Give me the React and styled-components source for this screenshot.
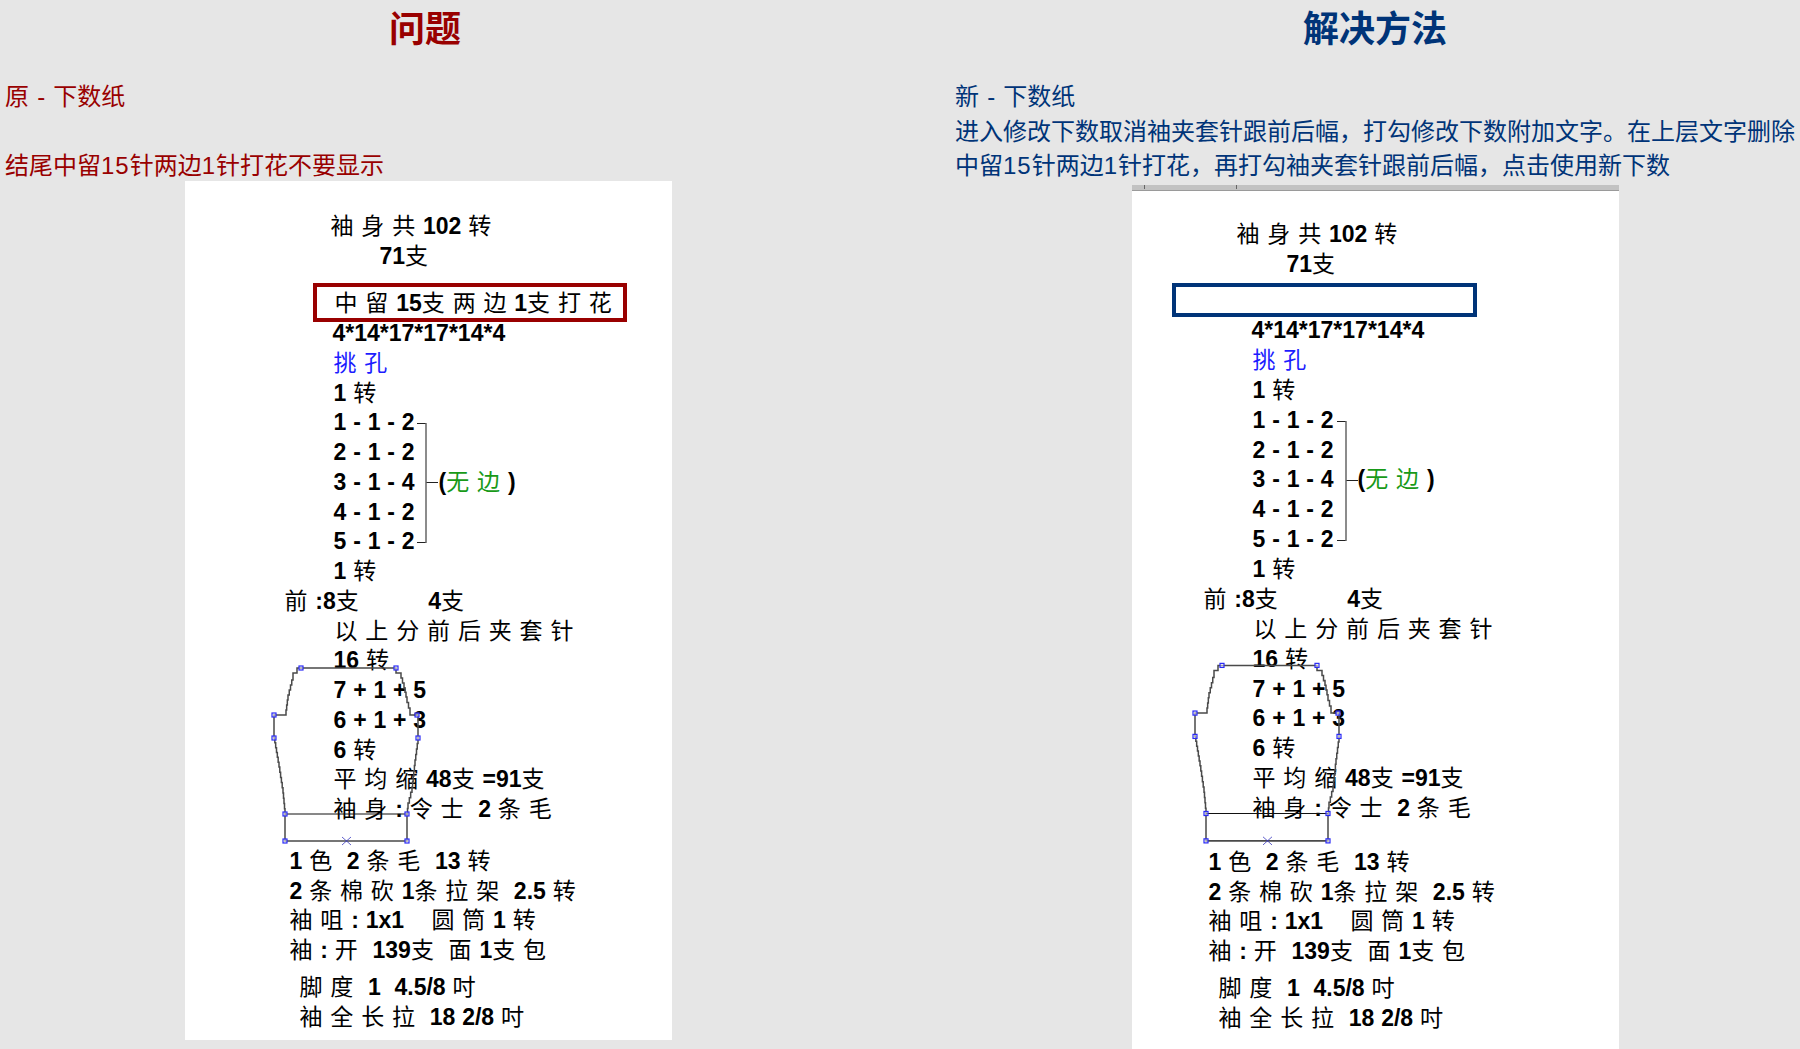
import React from "react";
import styled, { createGlobalStyle } from "styled-components";

const Global = createGlobalStyle`
  html, body { margin: 0; padding: 0; height: 100%; overflow: hidden; background: #e6e6e6; }
  body { font-family: "Liberation Sans", "Noto Sans CJK SC", sans-serif; }
`;

const Page = styled.div`
  display: grid;
  grid-template-columns: 850px 850px;
  column-gap: 100px;
  height: 1049px;
  overflow: hidden;
  background: #e6e6e6;
`;

const Column = styled.section`
  display: flex;
  flex-direction: column;
  align-items: center;
  min-width: 0;
  color: ${(p) => p.$color};
`;

const Heading = styled.h2`
  align-self: stretch;
  margin: 0 0 20px;
  height: 60px;
  line-height: 60px;
  text-align: center;
  font-size: 36px;
  font-weight: 700;
  font-family: "Liberation Sans", "Noto Sans CJK SC", sans-serif;
`;

const Notes = styled.div`
  align-self: stretch;
  height: 101px;
  padding-left: 5px;
  font-size: 24px;
  line-height: 34px;
  white-space: nowrap;
  word-spacing: 1.5px;
  font-family: "Liberation Sans", "Noto Sans CJK SC", sans-serif;
`;

const NoteLine = styled.div`
  height: 34.5px;
`;

const Digits = styled.span`
  letter-spacing: 1px;
`;

const Sheet = styled.div`
  position: relative;
  flex: none;
  width: 487px;
  height: ${(p) => p.$height}px;
  margin-top: ${(p) => p.$top}px;
  margin-left: ${(p) => p.$nudge}px;
  background: #fff;
  color: #000;
  font-size: 23px;
`;

const Ruler = styled.div`
  display: flex;
  gap: 91px;
  height: 5px;
  padding-left: 12px;
  background: #c2c2c2;
  border-bottom: 1px solid #9a9a9a;
`;

const Tick = styled.span`
  width: 1px;
  height: 4px;
  background: #666;
`;

const Rows = styled.div`
  position: relative;
  padding-top: ${(p) => p.$pad || 0}px;
  margin-top: ${(p) => p.$gap || 0}px;
`;

const Row = styled.div`
  height: ${(p) => p.$pitch}px;
  line-height: ${(p) => p.$pitch}px;
  padding-left: ${(p) => p.$x}px;
  white-space: pre;
  word-spacing: 0.45px;
  color: ${(p) => p.$tone || "#000"};
`;

const Num = styled.span`
  font-weight: 700;
  color: #000;
  font-family: "Liberation Sans", sans-serif;
`;

const Han = styled.span`
  letter-spacing: 1px;
  line-height: 0;
  font-family: "Noto Sans CJK SC", sans-serif;
  font-weight: 400;
`;

const Annot = styled.span`
  margin-left: 24px;
  color: #189a18;
`;

const Callout = styled.div`
  position: relative;
  box-sizing: border-box;
  width: ${(p) => p.$w}px;
  height: ${(p) => p.$h}px;
  margin-left: ${(p) => p.$x}px;
  margin-top: ${(p) => p.$gap}px;
  padding-left: 18px;
  line-height: ${(p) => p.$h - 6}px;
  border: 4px solid ${(p) => p.$color};
  white-space: pre;
  word-spacing: 0.45px;
  color: #000;
  background: #fff;
`;

const Drawing = styled.svg`
  position: absolute;
  left: ${(p) => p.$x}px;
  top: ${(p) => p.$y}px;
  overflow: visible;
  pointer-events: none;
`;

function Mixed({ text }) {
  return text
    .split(/([\u4e00-\u9fff]+)/)
    .filter(Boolean)
    .map((part, i) =>
      /[\u4e00-\u9fff]/.test(part) ? <Han key={i}>{part}</Han> : <Num key={i}>{part}</Num>
    );
}

// turn slanted outline segments into the small stairs of the pattern drawing
function stairs(points, step = 5) {
  let d = `M${points[0][0]} ${points[0][1]}`;
  for (let i = 1; i < points.length; i++) {
    const [x0, y0] = points[i - 1];
    const [x1, y1] = points[i];
    if (x0 === x1 || y0 === y1) {
      d += `L${x1} ${y1}`;
      continue;
    }
    const n = Math.max(1, Math.round(Math.abs(y1 - y0) / step));
    for (let k = 1; k <= n; k++) {
      d += `V${y0 + ((y1 - y0) * k) / n}H${x0 + ((x1 - x0) * k) / n}`;
    }
  }
  return d;
}

const OUTLINE = [
  [41, 28], [136, 28], [141, 33], [144, 43], [147, 57], [150, 68], [153, 75], [158, 75],
  [158, 98], [155, 120], [152, 147], [148, 163], [147, 174], [147, 201], [25, 201],
  [25, 174], [23, 153], [19, 127], [14, 98], [14, 75], [26, 75], [28, 60], [33, 40], [37, 33], [41, 28],
];
const NODES = [
  [41, 28], [136, 28], [14, 75], [157, 75], [14, 98], [158, 98], [25, 174], [147, 174], [25, 201], [147, 201],
];

function Garment({ x, y, height }) {
  return (
    <Drawing $x={x} $y={y} width="175" height={height} viewBox="0 0 175 210" preserveAspectRatio="none">
      <path d={stairs(OUTLINE)} fill="none" stroke="#4a4a4a" strokeWidth="1.5" />
      <path d="M25 174H147" stroke="#111" strokeWidth="1" />
      {NODES.map(([cx, cy]) => (
        <rect key={`${cx}-${cy}`} x={cx - 2} y={cy - 2} width="4" height="4" fill="#fff" fillOpacity="0.5" stroke="#2a2af5" strokeWidth="1.2" />
      ))}
      <path d="M82 197L91 205M91 197L82 205" stroke="#3a3ac0" strokeWidth="0.8" />
    </Drawing>
  );
}

function Bracket({ x, y }) {
  return (
    <Drawing $x={x} $y={y} width="22" height="120" viewBox="0 0 22 120">
      <path d="M0 0.5H9M0 119.5H9M9 59.5H21" stroke="#222" strokeWidth="1" fill="none" />
      <path d="M9 0V120" stroke="#666" strokeWidth="1.5" fill="none" />
    </Drawing>
  );
}

const BODY = [
  { t: "4*14*17*17*14*4", x: 148 },
  { t: "挑 孔", x: 149, tone: "#1c1cff" },
  { t: "1 转", x: 149 },
  { t: "1 - 1 - 2", x: 149 },
  { t: "2 - 1 - 2", x: 149 },
  { t: "3 - 1 - 4", x: 149, note: "(无 边 )" },
  { t: "4 - 1 - 2", x: 149 },
  { t: "5 - 1 - 2", x: 149 },
  { t: "1 转", x: 149 },
  { t: "前 :8支          4支", x: 100 },
  { t: "以 上 分 前 后 夹 套 针", x: 150 },
  { t: "16 转", x: 149 },
  { t: "7 + 1 + 5", x: 149 },
  { t: "6 + 1 + 3", x: 149 },
  { t: "6 转", x: 149 },
  { t: "平 均 缩 48支 =91支", x: 149 },
  { t: "袖 身 : 令 士  2 条 毛", x: 149 },
];
const SPEC = [
  { t: "1 色  2 条 毛  13 转", x: 105 },
  { t: "2 条 棉 砍 1条 拉 架  2.5 转", x: 105 },
  { t: "袖 咀 : 1x1    圆 筒 1 转", x: 105 },
  { t: "袖 : 开  139支  面 1支 包", x: 105 },
];
const SIZES = [
  { t: "脚 度  1  4.5/8 吋", x: 115 },
  { t: "袖 全 长 拉  18 2/8 吋", x: 115 },
];

function PatternRows({ rows, shift, pitch }) {
  return rows.map((r) => (
    <Row key={r.t} $x={r.x - shift} $pitch={pitch} $tone={r.tone}>
      <Mixed text={r.t} />
      {r.note && (
        <Annot>
          <Mixed text={r.note} />
        </Annot>
      )}
    </Row>
  ));
}

function Pattern({ top, nudge, height, ruler, headPad, head, shift, pitch, box, bodyGap, specGap, garment, bracket }) {
  return (
    <Sheet $top={top} $nudge={nudge} $height={height}>
      {ruler && (
        <Ruler>
          <Tick />
          <Tick />
        </Ruler>
      )}
      <Rows $pad={headPad}>
        <PatternRows rows={[{ t: "袖 身 共 102 转", x: head[0] }, { t: "71支", x: head[1] }]} shift={0} pitch={30} />
      </Rows>
      <Callout $x={box.x} $w={box.w} $h={box.h} $gap={box.gap} $color={box.color}>
        {box.text && <Mixed text={box.text} />}
      </Callout>
      <Rows $gap={bodyGap}>
        <PatternRows rows={BODY} shift={shift} pitch={pitch} />
      </Rows>
      <Rows $gap={specGap}>
        <PatternRows rows={SPEC} shift={shift} pitch={29.75} />
      </Rows>
      <Rows $gap={6}>
        <PatternRows rows={SIZES} shift={shift} pitch={30} />
      </Rows>
      <Garment {...garment} />
      <Bracket {...bracket} />
    </Sheet>
  );
}

export default function App() {
  return (
    <Page>
      <Global />
      <Column $color="#990000">
        <Heading>问题</Heading>
        <Notes>
          <NoteLine>原 - 下数纸</NoteLine>
          <NoteLine />
          <NoteLine>
            结尾中留<Digits>15</Digits>针两边<Digits>1</Digits>针打花不要显示
          </NoteLine>
        </Notes>
        <Pattern
          top={0}
          nudge={6}
          height={859}
          headPad={30}
          head={[146, 195]}
          shift={0}
          pitch={29.75}
          box={{ x: 128, w: 314, h: 39, gap: 12, color: "#990000", text: "中 留 15支 两 边 1支 打 花" }}
          bodyGap={-3}
          specGap={22}
          garment={{ x: 75, y: 459, height: 210 }}
          bracket={{ x: 232, y: 242 }}
        />
      </Column>
      <Column $color="#003478">
        <Heading>解决方法</Heading>
        <Notes>
          <NoteLine>新 - 下数纸</NoteLine>
          <NoteLine>进入修改下数取消袖夹套针跟前后幅，打勾修改下数附加文字。在上层文字删除</NoteLine>
          <NoteLine>
            中留<Digits>15</Digits>针两边<Digits>1</Digits>针打花，再打勾袖夹套针跟前后幅，点击使用新下数
          </NoteLine>
        </Notes>
        <Pattern
          top={4}
          nudge={0}
          height={880}
          ruler
          headPad={28}
          head={[105, 155]}
          shift={28}
          pitch={29.875}
          box={{ x: 40, w: 305, h: 34, gap: 4, color: "#003478" }}
          bodyGap={-1}
          specGap={24}
          garment={{ x: 49, y: 452, height: 213 }}
          bracket={{ x: 205, y: 236 }}
        />
      </Column>
    </Page>
  );
}
